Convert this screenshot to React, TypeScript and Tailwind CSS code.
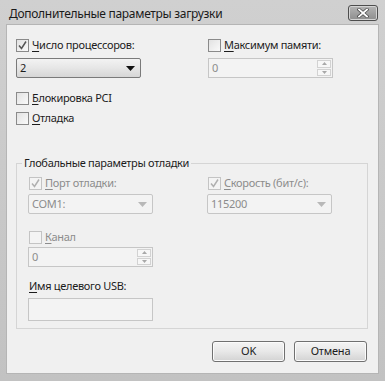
import type { ReactNode } from 'react';

const font = { fontFamily: '"Noto Sans", "Open Sans", sans-serif' };

function Hot({ children }: { children: ReactNode }) {
  return <span className="underline decoration-1 underline-offset-2">{children}</span>;
}

function CheckBox({ checked, disabled }: { checked?: boolean; disabled?: boolean }) {
  return (
    <span
      className={`relative grid h-[13px] w-[13px] shrink-0 place-items-center border ${
        disabled ? 'border-[#c4c4c4] bg-[#f4f4f4]' : 'border-[#8a8a8a] bg-gradient-to-br from-[#e2e2e2] to-[#fafafa]'
      }`}
    >
      {checked && (
        <svg width="9" height="9" viewBox="0 0 9 9">
          <path
            d="M1 4.5 L3.5 7.5 L8 0.5"
            fill="none"
            stroke={disabled ? '#b0b0b0' : '#555555'}
            strokeWidth="1.5"
          />
        </svg>
      )}
    </span>
  );
}

function CheckRow({
  checked,
  disabled,
  hot,
  rest,
  className = '',
}: {
  checked?: boolean;
  disabled?: boolean;
  hot: string;
  rest: string;
  className?: string;
}) {
  return (
    <div className={`flex h-4 items-center gap-[3px] ${className}`}>
      <CheckBox checked={checked} disabled={disabled} />
      <span
        className={`text-[11px] leading-4 tracking-[-0.3px] ${disabled ? 'text-[#8c8c8c]' : 'text-[#1c1c1c]'}`}
      >
        <Hot>{hot}</Hot>
        {rest}
      </span>
    </div>
  );
}

function Arrow({ color }: { color: string }) {
  return (
    <svg width="9" height="5" viewBox="0 0 9 5">
      <path d="M0 0 H9 L4.5 5 Z" fill={color} />
    </svg>
  );
}

function Combo({ value, disabled, className = '' }: { value: string; disabled?: boolean; className?: string }) {
  return (
    <div
      className={`flex h-5 w-[125px] items-center justify-between rounded-[2px] border pl-[3px] pr-[5px] text-[11px] tracking-[-0.3px] ${
        disabled
          ? 'border-[#c6c6c6] bg-[#f3f3f3] text-[#8c8c8c]'
          : 'border-[#7a7a7a] bg-gradient-to-b from-[#f3f3f3] via-[#e6e6e6] to-[#d6d6d6] text-[#1c1c1c]'
      } ${className}`}
    >
      <span>{value}</span>
      <Arrow color={disabled ? '#b8b8b8' : '#111111'} />
    </div>
  );
}

function Spin({ value, className = '' }: { value: string; className?: string }) {
  return (
    <div
      className={`flex h-5 w-[125px] items-stretch border border-[#c6c6c6] bg-[#f3f3f3] text-[11px] text-[#8c8c8c] ${className}`}
    >
      <span className="flex-1 pl-[3px] leading-[18px]">{value}</span>
      <div className="flex w-[15px] flex-col gap-px py-px pr-px">
        <div className="grid flex-1 place-items-center border border-[#d2d2d2] bg-[#f7f7f7]">
          <svg width="5" height="3" viewBox="0 0 5 3">
            <path d="M0 3 L2.5 0 L5 3 Z" fill="#a8a8a8" />
          </svg>
        </div>
        <div className="grid flex-1 place-items-center border border-[#d2d2d2] bg-[#f7f7f7]">
          <svg width="5" height="3" viewBox="0 0 5 3">
            <path d="M0 0 L2.5 3 L5 0 Z" fill="#a8a8a8" />
          </svg>
        </div>
      </div>
    </div>
  );
}

function Button({ label }: { label: string }) {
  return (
    <button
      type="button"
      className="h-[21px] w-[73px] rounded-[3px] border border-[#707070] bg-gradient-to-b from-[#f4f4f4] via-[#e8e8e8] to-[#d3d3d3] text-[11px] tracking-[-0.2px] text-[#1c1c1c] shadow-[inset_0_0_0_1px_#fbfbfb]"
    >
      {label}
    </button>
  );
}

export default function App() {
  return (
    <div
      className="flex h-[381px] w-[385px] flex-col bg-gradient-to-b from-[#d0d0d0] to-[#c2c2c2] px-[6px] pb-[7px]"
      style={font}
    >
      {/* Title bar */}
      <div className="flex h-6 items-start justify-between">
        <span className="pl-[3px] pt-[5px] text-[12px] leading-[18px] tracking-[-0.3px] text-[#1a1a1a]">
          Дополнительные параметры загрузки
        </span>
        <div className="mr-px mt-[5px] grid h-[16px] w-[30px] place-items-center rounded-[3px] border border-[#4d4d4d] bg-gradient-to-b from-[#b4b4b4] to-[#8e8e8e] shadow-[inset_0_0_0_1px_#d4d4d4]">
          <svg width="12" height="10" viewBox="0 0 12 10">
            <path d="M2 1.5 L10 8.5 M10 1.5 L2 8.5" stroke="#4a4a4a" strokeWidth="3.2" strokeLinecap="square" />
            <path d="M2 1.5 L10 8.5 M10 1.5 L2 8.5" stroke="#ffffff" strokeWidth="1.8" strokeLinecap="square" />
          </svg>
        </div>
      </div>

      {/* Client area */}
      <div className="flex flex-1 flex-col border border-[#b5b5b5] bg-[#f0f0f0] pl-[9px] pr-[10px] pt-[12px]">
        <div className="flex">
          <div className="w-[192px]">
            <CheckRow checked hot="Ч" rest="исло процессоров:" />
            <Combo value="2" className="mt-[5px]" />
          </div>
          <div>
            <CheckRow hot="М" rest="аксимум памяти:" />
            <Spin value="0" className="mt-[5px]" />
          </div>
        </div>

        <CheckRow hot="Б" rest="локировка PCI" className="mt-[12px]" />
        <CheckRow hot="О" rest="тладка" className="mt-[4px]" />

        <fieldset className="mt-[29px] border border-[#d5d5d5] px-[12px] pb-[7px] pt-[4px]">
          <legend className="-ml-[7px] px-[2px] text-[11px] leading-4 tracking-[-0.3px] text-[#1c1c1c]">
            Глобальные параметры отладки
          </legend>
          <div className="flex">
            <div className="w-[179px]">
              <CheckRow checked disabled hot="П" rest="орт отладки:" />
              <Combo value="COM1:" disabled className="-ml-px mt-[3px]" />
            </div>
            <div>
              <CheckRow checked disabled hot="С" rest="корость (бит/с):" />
              <Combo value="115200" disabled className="-ml-px mt-[3px]" />
            </div>
          </div>
          <CheckRow disabled hot="К" rest="анал" className="mt-[15px]" />
          <Spin value="0" className="-ml-px mt-[2px]" />
          <div className="mt-[11px] text-[11px] leading-4 tracking-[-0.3px] text-[#1c1c1c]">
            <Hot>И</Hot>мя целевого USB:
          </div>
          <div className="-ml-px mt-[4px] h-[23px] w-[125px] border border-[#c6c6c6] bg-[#f3f3f3]" />
        </fieldset>

        <div className="mt-[12px] flex justify-end gap-[9px] pr-px">
          <Button label="OK" />
          <Button label="Отмена" />
        </div>
      </div>
    </div>
  );
}
